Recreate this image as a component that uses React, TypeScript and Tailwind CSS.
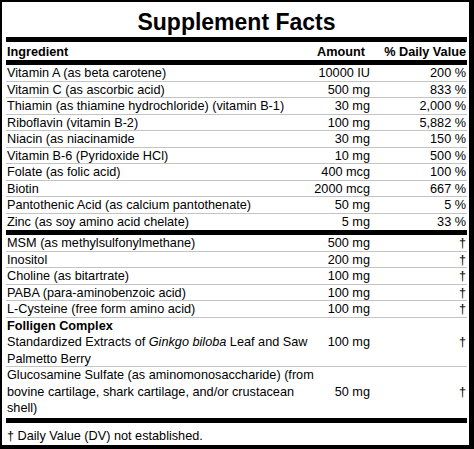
import type { ReactNode } from "react";

type Row = { name: ReactNode; amount: string; dv: string; line?: boolean };

const vitamins: Row[] = [
  { name: "Vitamin A (as beta carotene)", amount: "10000 IU", dv: "200 %", line: true },
  { name: "Vitamin C (as ascorbic acid)", amount: "500 mg", dv: "833 %", line: true },
  { name: "Thiamin (as thiamine hydrochloride) (vitamin B-1)", amount: "30 mg", dv: "2,000 %", line: true },
  { name: "Riboflavin (vitamin B-2)", amount: "100 mg", dv: "5,882 %", line: true },
  { name: "Niacin (as niacinamide", amount: "30 mg", dv: "150 %", line: true },
  { name: "Vitamin B-6 (Pyridoxide HCl)", amount: "10 mg", dv: "500 %", line: true },
  { name: "Folate (as folic acid)", amount: "400 mcg", dv: "100 %", line: true },
  { name: "Biotin", amount: "2000 mcg", dv: "667 %", line: true },
  { name: "Pantothenic Acid (as calcium pantothenate)", amount: "50 mg", dv: "5 %", line: true },
  { name: "Zinc (as soy amino acid chelate)", amount: "5 mg", dv: "33 %" },
];

const others: Row[] = [
  { name: "MSM (as methylsulfonylmethane)", amount: "500 mg", dv: "†", line: true },
  { name: "Inositol", amount: "200 mg", dv: "†", line: true },
  { name: "Choline (as bitartrate)", amount: "100 mg", dv: "†", line: true },
  { name: "PABA (para-aminobenzoic acid)", amount: "100 mg", dv: "†", line: true },
  { name: "L-Cysteine (free form amino acid)", amount: "100 mg", dv: "†", line: true },
  {
    name: (
      <>
        <div className="font-bold">Folligen Complex</div>
        <div>
          <span>Standardized Extracts of </span>
          <i>Ginkgo biloba</i>
          <span> Leaf and Saw</span>
        </div>
        <div>Palmetto Berry</div>
      </>
    ),
    amount: "100 mg",
    dv: "†",
    line: true,
  },
  {
    name: (
      <>
        <div>Glucosamine Sulfate (as aminomonosaccharide) (from</div>
        <div>bovine cartilage, shark cartilage, and/or crustacean</div>
        <div>shell)</div>
      </>
    ),
    amount: "50 mg",
    dv: "†",
  },
];

const cols = "grid grid-cols-[310px_54px_1fr] items-center";

function FactRow({ row }: { row: Row }) {
  return (
    <div className={`${cols} leading-[16.5px] ${row.line ? "shadow-[inset_0_-1px_0_#c4c4c4]" : ""}`}>
      <div className="whitespace-nowrap pl-px">{row.name}</div>
      <div className="flex justify-end whitespace-nowrap">{row.amount}</div>
      <div className="pr-px text-right">{row.dv}</div>
    </div>
  );
}

const Rule = () => <div className="h-[5px] bg-black" />;

export default function App() {
  return (
    <div className="box-border h-[449px] w-[474px] overflow-hidden border-t-2 border-l-2 border-r-[5px] border-b-4 border-black bg-white pl-[4px] pr-[2px] font-['Liberation_Sans',Arial,sans-serif] text-[12.7px] text-black">
      {/* Title */}
      <h1 className="mb-[2px] pt-[7px] text-center text-[23px] font-bold leading-[26px]">Supplement Facts</h1>
      <Rule />

      {/* Column heads */}
      <div className={`${cols} h-[18px] pt-[3px] font-bold leading-[15px]`}>
        <div className="pl-px">Ingredient</div>
        <div className="flex justify-end whitespace-nowrap pr-[5px]">Amount</div>
        <div className="pr-px text-right">% Daily Value</div>
      </div>
      <Rule />

      <div>
        {vitamins.map((r, i) => (
          <FactRow key={i} row={r} />
        ))}
      </div>
      <Rule />

      <div className="pb-[1.5px]">
        {others.map((r, i) => (
          <FactRow key={i} row={r} />
        ))}
      </div>
      <Rule />

      {/* Footnote */}
      <p className="pl-px pt-[4.5px] leading-[16.5px]">† Daily Value (DV) not established.</p>
    </div>
  );
}
